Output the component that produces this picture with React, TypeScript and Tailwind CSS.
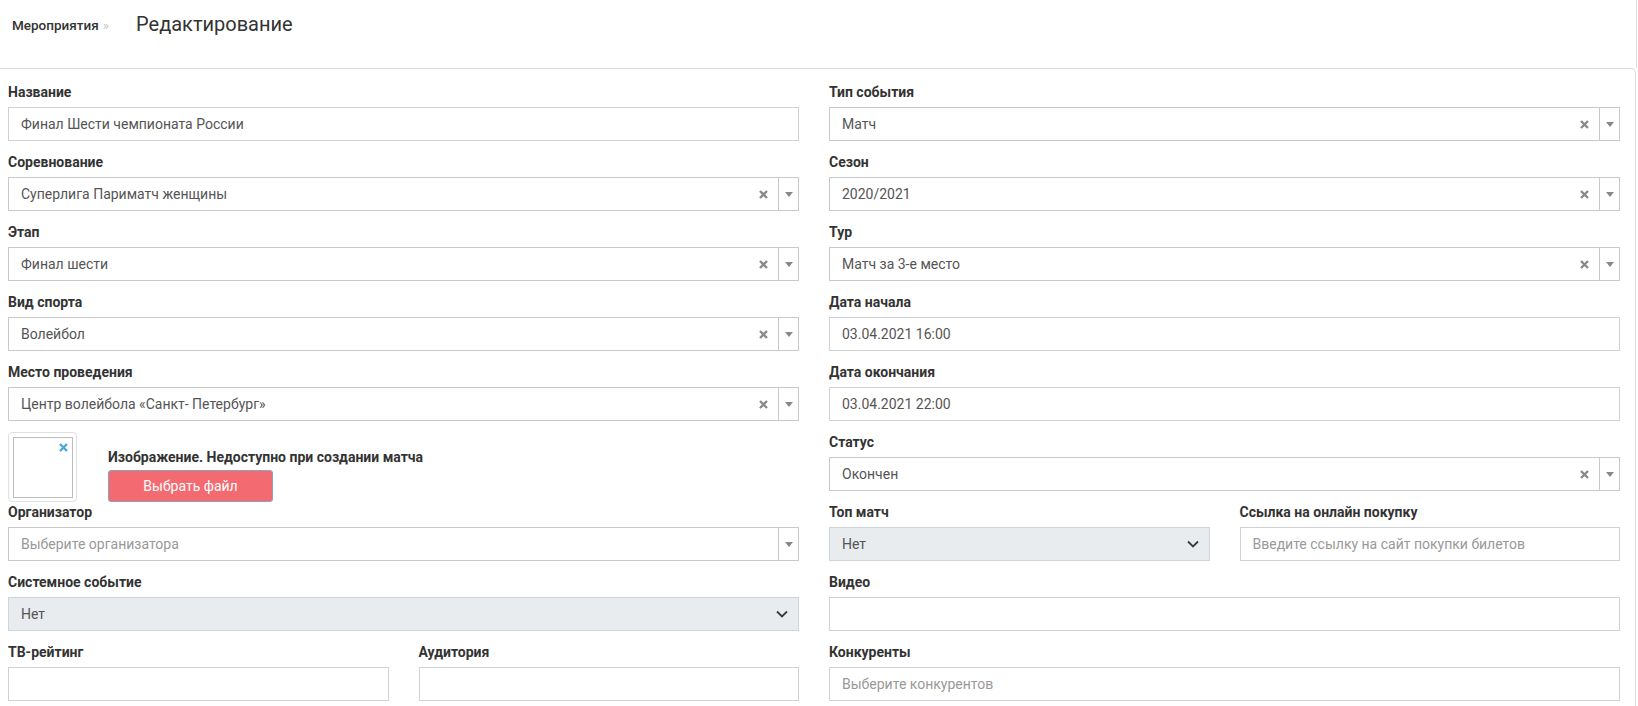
import React from "react";

const font = "font-['Roboto','Liberation_Sans',sans-serif]";

function Label({ children }: { children: React.ReactNode }) {
  return (
    <div className="h-[20px] leading-[20px] mb-[5px] text-[14px] font-bold text-[#333] whitespace-nowrap">
      {children}
    </div>
  );
}

function Clear() {
  return (
    <svg width="9" height="9" viewBox="0 0 9 9" className="block">
      <path d="M1 1L8 8M8 1L1 8" stroke="#8a8a8a" strokeWidth="2.4" strokeLinecap="butt" />
    </svg>
  );
}

function Select2({ value, placeholder, clear = true }: { value?: string; placeholder?: string; clear?: boolean }) {
  return (
    <div className="flex h-[34px] border border-[#c9c9c9] bg-white">
      <div className={`flex-1 flex items-center pl-[12px] text-[14px] ${value ? "text-[#555]" : "text-[#999]"}`}>
        {value ?? placeholder}
      </div>
      {clear && (
        <div className="w-[30px] flex items-center justify-center">
          <Clear />
        </div>
      )}
      <div className="w-[20px] border-l border-[#c9c9c9] flex items-center justify-center">
        <div className="w-0 h-0 border-x-[4px] border-x-transparent border-t-[5px] border-t-[#888]" />
      </div>
    </div>
  );
}

function Input({ value, placeholder }: { value?: string; placeholder?: string }) {
  return (
    <div className="flex items-center h-[34px] border border-[#cfd0d8] bg-white pl-[12px] text-[14px]">
      {value ? <span className="text-[#555]">{value}</span> : <span className="text-[#999]">{placeholder}</span>}
    </div>
  );
}

function GraySelect({ value }: { value: string }) {
  return (
    <div className="flex items-center justify-between h-[34px] border border-[#cfd4da] bg-[#e9ecef] pl-[12px] pr-[10px] text-[14px] text-[#555]">
      <span>{value}</span>
      <svg width="12" height="8" viewBox="0 0 12 8" className="block">
        <path d="M1 1.5L6 6.5L11 1.5" fill="none" stroke="#343a40" strokeWidth="1.8" />
      </svg>
    </div>
  );
}

function Field({ label, children }: { label: string; children: React.ReactNode }) {
  return (
    <div className="mb-[11px]">
      <Label>{label}</Label>
      {children}
    </div>
  );
}

export default function App() {
  return (
    <div className={`${font} w-[1638px] h-[706px] overflow-hidden bg-white flex flex-col`}>
      <div className="h-[68px] shrink-0 w-[1637px] border-r border-[#ddd] flex items-start pt-[13px]">
        <div className="flex items-center h-[22px] pl-[12px] pt-[3px]">
          <span className="text-[13.5px] font-medium text-[#333]">Мероприятия</span>
          <span className="text-[13.5px] text-[#c4c4c4] ml-[4px]">»</span>
        </div>
        <div className="ml-[27px] h-[22px] leading-[22px] text-[20px] text-[#333]">Редактирование</div>
      </div>
      <div className="flex-1 w-[1636px] border-t border-r border-[#dcdcdc] rounded-tr-[5px] pl-[8px] pr-[15px] pt-[13px]">
        <div className="grid grid-cols-2 gap-x-[30px]">
          <div className="flex flex-col">
            <Field label="Название">
              <Input value="Финал Шести чемпионата России" />
            </Field>
            <Field label="Соревнование">
              <Select2 value="Суперлига Париматч женщины" />
            </Field>
            <Field label="Этап">
              <Select2 value="Финал шести" />
            </Field>
            <Field label="Вид спорта">
              <Select2 value="Волейбол" />
            </Field>
            <Field label="Место проведения">
              <Select2 value="Центр волейбола «Санкт- Петербург»" />
            </Field>
            <div className="h-[70px] flex">
              <div className="w-[69px] h-[70px] border border-[#e0e0e0] rounded-[4px] p-[4px] shrink-0">
                <div className="relative w-[60px] h-[61px] border border-[#bdbdbd]">
                  <svg width="9" height="9" viewBox="0 0 9 9" className="absolute right-[4px] top-[5px]">
                    <path d="M1 1L8 8M8 1L1 8" stroke="#4ea6dc" strokeWidth="2.4" />
                  </svg>
                </div>
              </div>
              <div className="ml-[31px] pt-[15px] flex flex-col">
                <div className="h-[20px] leading-[20px] text-[14px] font-bold text-[#333] whitespace-nowrap">
                  Изображение. Недоступно при создании матча
                </div>
                <button className="mt-[3px] w-[165px] h-[33px] rounded-[3px] bg-[#f36b70] border border-[#8aa3bd] text-white text-[14px] flex items-center justify-center">
                  Выбрать файл
                </button>
              </div>
            </div>
            <Field label="Организатор">
              <Select2 placeholder="Выберите организатора" clear={false} />
            </Field>
            <Field label="Системное событие">
              <GraySelect value="Нет" />
            </Field>
            <div className="grid grid-cols-2 gap-x-[30px]">
              <Field label="ТВ-рейтинг">
                <Input />
              </Field>
              <Field label="Аудитория">
                <Input />
              </Field>
            </div>
          </div>
          <div className="flex flex-col">
            <Field label="Тип события">
              <Select2 value="Матч" />
            </Field>
            <Field label="Сезон">
              <Select2 value="2020/2021" />
            </Field>
            <Field label="Тур">
              <Select2 value="Матч за 3-е место" />
            </Field>
            <Field label="Дата начала">
              <Input value="03.04.2021 16:00" />
            </Field>
            <Field label="Дата окончания">
              <Input value="03.04.2021 22:00" />
            </Field>
            <Field label="Статус">
              <Select2 value="Окончен" />
            </Field>
            <div className="grid grid-cols-2 gap-x-[30px]">
              <Field label="Топ матч">
                <GraySelect value="Нет" />
              </Field>
              <Field label="Ссылка на онлайн покупку">
                <Input placeholder="Введите ссылку на сайт покупки билетов" />
              </Field>
            </div>
            <Field label="Видео">
              <Input />
            </Field>
            <Field label="Конкуренты">
              <Input placeholder="Выберите конкурентов" />
            </Field>
          </div>
        </div>
      </div>
    </div>
  );
}
